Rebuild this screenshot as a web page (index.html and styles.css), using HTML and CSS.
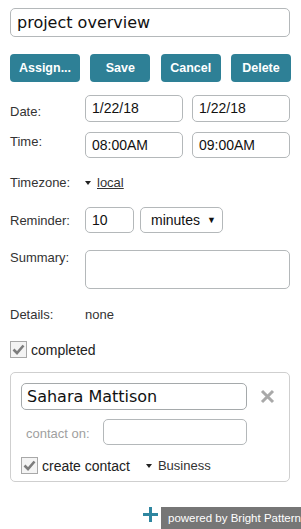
FILE: index.html
```html
<!DOCTYPE html>
<html>
<head>
<meta charset="utf-8">
<link rel="stylesheet" href="styles.css">
</head>
<body>
<div class="page">
  <div class="title-input">project overview</div>

  <div class="buttons">
    <div class="btn btn-wide">Assign...</div>
    <div class="btn">Save</div>
    <div class="btn">Cancel</div>
    <div class="btn">Delete</div>
  </div>

  <div class="row row-date">
    <div class="label label-date">Date:</div>
    <div class="field half">1/22/18</div>
    <div class="field half">1/22/18</div>
  </div>

  <div class="row row-time">
    <div class="label label-time">Time:</div>
    <div class="field half">08:00AM</div>
    <div class="field half">09:00AM</div>
  </div>

  <div class="row row-tz">
    <div class="label">Timezone:</div>
    <div class="tz"><span class="caret"></span><span class="link">local</span></div>
  </div>

  <div class="row row-rem">
    <div class="label label-rem">Reminder:</div>
    <div class="field small">10</div>
    <div class="field select">minutes<span class="sel-arrow">&#9660;</span></div>
  </div>

  <div class="row row-sum">
    <div class="label">Summary:</div>
    <div class="field area"></div>
  </div>

  <div class="row row-details">
    <div class="label">Details:</div>
    <div class="value">none</div>
  </div>

  <div class="check-row row-completed">
    <span class="checkbox"><svg width="13" height="11" viewBox="0 0 13 11"><path d="M1.5 5.5 L5 9 L11.5 1.5" fill="none" stroke="#7d7d7d" stroke-width="2.6"/></svg></span>
    <span class="check-text">completed</span>
  </div>

  <div class="contact">
    <div class="contact-top">
      <div class="name-input">Sahara Mattison</div>
      <svg class="close" width="15" height="15" viewBox="0 0 15 15"><path d="M2 2 L13 13 M13 2 L2 13" stroke="#a9a9a9" stroke-width="3"/></svg>
    </div>
    <div class="contact-on">
      <div class="muted">contact on:</div>
      <div class="field on-input"></div>
    </div>
    <div class="check-row">
      <span class="checkbox"><svg width="13" height="11" viewBox="0 0 13 11"><path d="M1.5 5.5 L5 9 L11.5 1.5" fill="none" stroke="#7d7d7d" stroke-width="2.6"/></svg></span>
      <span class="check-text">create contact</span>
      <span class="biz"><span class="caret"></span>Business</span>
    </div>
  </div>

  <div class="footer">
    <svg class="plus" width="15" height="15" viewBox="0 0 15 15"><path d="M7.5 0 V15 M0 7.5 H15" stroke="#2f86a0" stroke-width="3"/></svg>
    <div class="powered">powered by Bright Pattern</div>
  </div>
</div>
</body>
</html>
```

FILE: styles.css
```css
* { box-sizing: border-box; }
html, body { margin: 0; padding: 0; background: #fff; }
body {
  font-family: "Liberation Sans", Arial, sans-serif;
  font-size: 13px;
  color: #333;
  width: 301px;
  height: 529px;
  overflow: hidden;
}
.page {
  padding: 8px 10px 0 10px;
}
.title-input {
  width: 280px;
  height: 29px;
  border: 1px solid #b4b8ba;
  border-radius: 5px;
  font-family: "DejaVu Sans", sans-serif;
  font-size: 16px;
  line-height: 27px;
  padding-left: 6px;
  color: #111;
}
.buttons {
  display: flex;
  justify-content: space-between;
  margin-top: 17px;
  width: 281px;
}
.btn {
  width: 60px;
  height: 28px;
  background: #2e8096;
  border-radius: 4px;
  color: #fff;
  font-weight: bold;
  font-size: 12.5px;
  line-height: 28px;
  text-align: center;
}
.btn-wide { width: 70px; }

.row {
  display: flex;
  align-items: flex-start;
}
.label {
  width: 75px;
  flex: none;
  line-height: 16px;
}
.field {
  border: 1px solid #b4b8ba;
  border-radius: 5px;
  font-size: 14px;
  color: #111;
  padding-left: 6px;
}
.half {
  width: 98px;
  height: 27px;
  line-height: 25px;
}
.half + .half { margin-left: 9px; }
.row-date { margin-top: 13px; }
.label-date { padding-top: 9px; }
.row-time { margin-top: 10px; }
.label-time { padding-top: 2px; }
.row-time .half { height: 26px; line-height: 24px; }

.row-tz { margin-top: 17px; }
.tz { display: flex; align-items: center; line-height: 16px; }
.caret {
  display: inline-block;
  width: 0; height: 0;
  border-left: 3.5px solid transparent;
  border-right: 3.5px solid transparent;
  border-top: 4px solid #222;
  margin-right: 6px;
  vertical-align: middle;
}
.link { text-decoration: underline; color: #333; font-size: 13px; }

.row-rem { margin-top: 16px; }
.label-rem { padding-top: 6px; }
.small {
  width: 49px;
  height: 26px;
  line-height: 24px;
}
.select {
  width: 83px;
  height: 26px;
  line-height: 24px;
  margin-left: 6px;
  padding-left: 10px;
  position: relative;
}
.sel-arrow {
  position: absolute;
  right: 6px;
  top: 0;
  font-size: 9px;
  color: #111;
}

.row-sum { margin-top: 17px; }
.area {
  width: 205px;
  height: 39px;
}

.row-details { margin-top: 18px; }
.value { line-height: 16px; }

.check-row {
  display: flex;
  align-items: center;
}
.row-completed { margin-top: 18px; }
.checkbox {
  width: 17px;
  height: 17px;
  border: 1px solid #a8a8a8;
  background: #f4f4f4;
  display: flex;
  align-items: center;
  justify-content: center;
  flex: none;
}
.check-text {
  font-size: 14px;
  color: #222;
  margin-left: 4px;
}

.contact {
  margin-top: 14px;
  width: 280px;
  height: 110px;
  border: 1px solid #cfcfcf;
  border-radius: 5px;
  padding: 10px 10px 0 10px;
}
.contact-top {
  display: flex;
  align-items: center;
}
.name-input {
  width: 226px;
  height: 27px;
  border: 1px solid #a5a9ab;
  border-radius: 5px;
  font-family: "DejaVu Sans", sans-serif;
  font-size: 16px;
  line-height: 25px;
  padding-left: 5px;
  color: #111;
}
.close { margin-left: 13px; }
.contact-on {
  display: flex;
  align-items: center;
  margin-top: 9px;
}
.muted {
  color: #a0a0a0;
  width: 82px;
  padding-left: 5px;
  padding-top: 2px;
}
.on-input {
  width: 144px;
  height: 26px;
}
.contact .check-row { margin-top: 12px; }
.biz {
  margin-left: 16px;
  font-size: 13px;
  color: #333;
  display: flex;
  align-items: center;
}

.footer {
  position: absolute;
  left: 0;
  top: 507px;
  width: 301px;
  display: flex;
  justify-content: flex-end;
  align-items: flex-start;
}
.plus { margin-right: 3px; margin-top: 0; }
.powered {
  width: 140px;
  height: 22px;
  background: #767676;
  color: #fff;
  font-size: 11.5px;
  line-height: 22px;
  padding-left: 7px;
  white-space: nowrap;
  overflow: hidden;
}
```
